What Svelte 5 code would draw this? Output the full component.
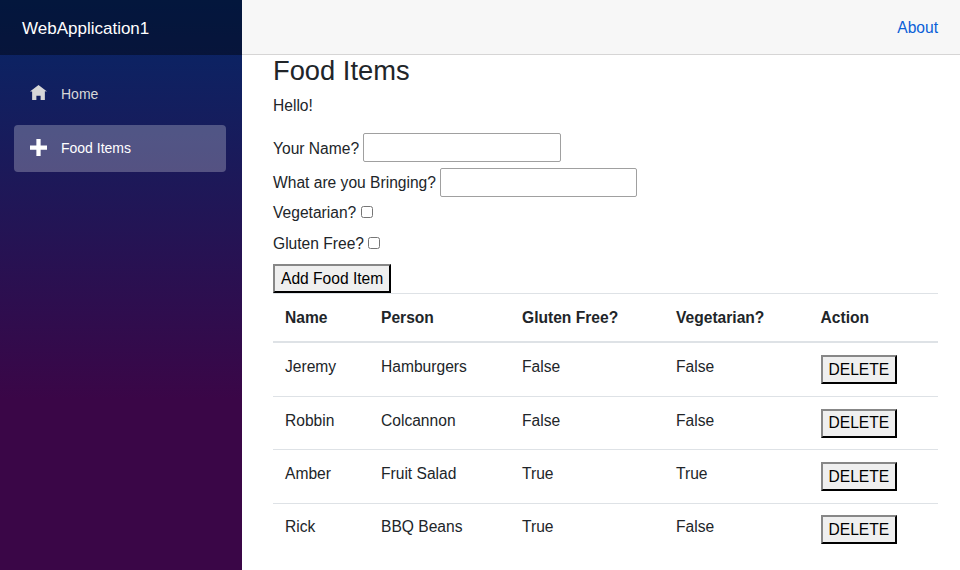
<script lang="ts">
  const foods = [
    { name: 'Jeremy', person: 'Hamburgers', glutenFree: 'False', vegetarian: 'False' },
    { name: 'Robbin', person: 'Colcannon', glutenFree: 'False', vegetarian: 'False' },
    { name: 'Amber', person: 'Fruit Salad', glutenFree: 'True', vegetarian: 'True' },
    { name: 'Rick', person: 'BBQ Beans', glutenFree: 'True', vegetarian: 'False' },
  ]
</script>

<div class="page">
  <aside class="sidebar">
    <div class="brand">WebApplication1</div>
    <nav>
      <a class="nav-link" href="#home">
        <svg viewBox="0 0 8 8" width="17" height="17"><path d="M4 0l-4 3h1v4h2v-2h2v2h2v-4.03l1 .03-4-3z" /></svg>
        Home
      </a>
      <a class="nav-link active" href="#food">
        <svg viewBox="0 0 8 8" width="17" height="17"><path d="M3 0v3h-3v2h3v3h2v-3h3v-2h-3v-3h-2z" /></svg>
        Food Items
      </a>
    </nav>
  </aside>

  <div class="main">
    <header class="top-row"><a href="#about">About</a></header>
    <main class="content">
      <h1>Food Items</h1>
      <p class="hello">Hello!</p>
      <div class="field"><span>Your Name?</span> <input type="text" /></div>
      <div class="field"><span>What are you Bringing?</span> <input type="text" /></div>
      <div class="check">Vegetarian? <input type="checkbox" /></div>
      <div class="check">Gluten Free? <input type="checkbox" /></div>
      <button class="add">Add Food Item</button>
      <table>
        <thead>
          <tr>
            <th class="c1">Name</th>
            <th class="c2">Person</th>
            <th class="c3">Gluten Free?</th>
            <th class="c4">Vegetarian?</th>
            <th>Action</th>
          </tr>
        </thead>
        <tbody>
          {#each foods as food}
            <tr>
              <td>{food.name}</td>
              <td>{food.person}</td>
              <td>{food.glutenFree}</td>
              <td>{food.vegetarian}</td>
              <td><button>DELETE</button></td>
            </tr>
          {/each}
        </tbody>
      </table>
    </main>
  </div>
</div>

<style>
  :global(body) {
    font-family: "Liberation Sans", Arial, sans-serif;
    font-size: 15.6px;
    color: #212529;
  }
  .page {
    display: flex;
    height: 570px;
    overflow: hidden;
  }
  .sidebar {
    width: 242px;
    flex: none;
    background: linear-gradient(180deg, #052767 0%, #3a0647 70%);
  }
  .brand {
    height: 55px;
    box-sizing: border-box;
    padding: 18px 0 0 22px;
    font-size: 17px;
    line-height: 21px;
    color: #fff;
    background: rgba(0, 0, 0, 0.4);
  }
  nav {
    display: flex;
    flex-direction: column;
    gap: 7px;
    padding: 16px 16px 0 14px;
  }
  .nav-link {
    display: flex;
    align-items: center;
    gap: 14px;
    height: 47px;
    box-sizing: border-box;
    padding: 0 0 2px 16px;
    border-radius: 4px;
    color: #d7d7d7;
    font-size: 14px;
    text-decoration: none;
  }
  .nav-link svg {
    fill: currentColor;
  }
  .active {
    background: rgba(255, 255, 255, 0.25);
    color: #fff;
  }
  .main {
    flex: 1;
    min-width: 0;
  }
  .top-row {
    height: 55px;
    box-sizing: border-box;
    display: flex;
    align-items: center;
    justify-content: flex-end;
    padding: 1px 22px 0 0;
    background: #f7f7f7;
    border-bottom: 1px solid #d6d5d5;
  }
  .top-row a {
    color: #0a5fd8;
    text-decoration: none;
  }
  .content {
    padding: 1px 22px 0 31px;
  }
  h1 {
    margin: 0;
    font-size: 27.3px;
    font-weight: 400;
    line-height: 30px;
  }
  .hello {
    margin: 8px 0 15px;
    line-height: 24px;
  }
  .field {
    display: flex;
    align-items: center;
    gap: 4px;
    height: 29px;
    margin-bottom: 5.5px;
  }
  .field + .field {
    margin-bottom: 4.5px;
  }
  .field span {
    padding-top: 2px;
  }
  input[type="text"] {
    width: 197.4px;
    height: 29px;
    box-sizing: border-box;
    border: 1px solid #a0a0a0;
    border-radius: 2px;
    padding: 1px 2px;
    margin: 0;
  }
  .check {
    height: 31px;
    line-height: 24px;
  }
  .check input {
    margin: 0;
    width: 12px;
    height: 12px;
  }
  button {
    display: block;
    height: 29px;
    padding: 0 6px;
    font: inherit;
    color: #000;
    background: #efefef;
    border: 2px outset #333;
  }
  .add {
    margin-top: 1px;
  }
  table {
    width: 100%;
    border-collapse: collapse;
  }
  th,
  td {
    padding: 11.7px 12px;
    text-align: left;
    vertical-align: top;
    border-top: 1px solid #dee2e6;
    line-height: 23.4px;
  }
  th {
    padding-bottom: 11.5px;
    border-bottom: 2px solid #dee2e6;
  }
  tbody tr:first-child td {
    padding-top: 12.7px;
  }
  .c1 {
    width: 72px;
  }
  .c2 {
    width: 117px;
  }
  .c3 {
    width: 130px;
  }
  .c4 {
    width: 120.5px;
  }
</style>
